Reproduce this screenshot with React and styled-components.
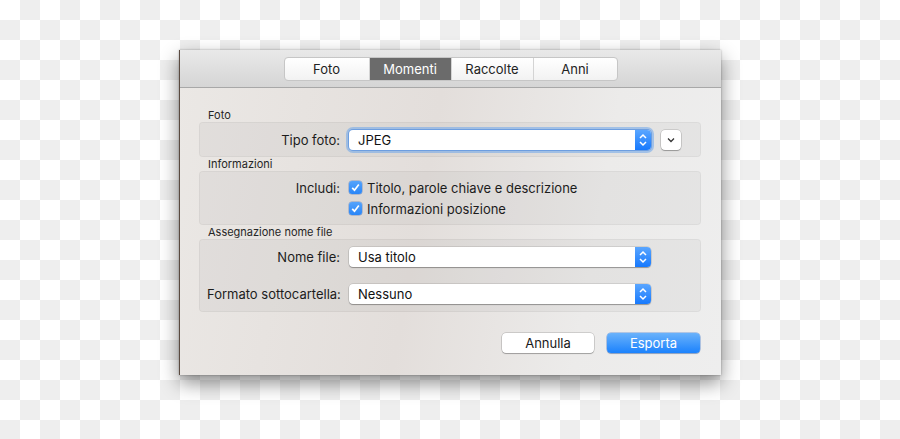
import React from 'react'
import styled, { createGlobalStyle } from 'styled-components'

const GlobalStyle = createGlobalStyle`
  body {
    margin: 0;
    font-family: Inter, 'Liberation Sans', sans-serif;
  }
`

const Page = styled.div`
  width: 900px;
  height: 439px;
  box-sizing: border-box;
  padding: 50px 0 0 179px;
  background-color: #fff;
  background-image: conic-gradient(#eee 0 25%, #fff 0 50%, #eee 0 75%, #fff 0);
  background-size: 40px 40px;
  overflow: hidden;
`

const Dialog = styled.div`
  width: 542px;
  height: 325px;
  display: flex;
  flex-direction: column;
  background: linear-gradient(100deg, #ebe8e5 0%, #e3dedb 45%, #ecebea 75%, #eeeeee 100%);
  box-shadow: 0 8px 18px rgba(0, 0, 0, 0.45), 0 0 2px rgba(0, 0, 0, 0.3);
  border-left: 1px solid #5a4a40;
  box-sizing: border-box;
`

const Toolbar = styled.div`
  height: 38px;
  flex-shrink: 0;
  display: flex;
  align-items: center;
  justify-content: center;
  background: linear-gradient(#e9e9e9, #d5d5d5);
  border-bottom: 1px solid #a8a8a8;
  box-sizing: border-box;
`

const Segmented = styled.div`
  display: flex;
  height: 24px;
  border: 1px solid #c6c6c6;
  border-radius: 4px;
  overflow: hidden;
  background: linear-gradient(#ffffff, #f2f2f2);
  box-sizing: border-box;
`

const Segment = styled.div`
  width: ${(p) => p.w}px;
  display: flex;
  align-items: center;
  justify-content: center;
  font-size: 13px;
  color: ${(p) => (p.active ? '#fff' : '#222')};
  background: ${(p) => (p.active ? '#6b6b6b' : 'transparent')};
  border-left: ${(p) => (p.first ? 'none' : '1px solid #d4d4d4')};
`

const Content = styled.div`
  padding: 20px 20px 0 19px;
`

const SectionLabel = styled.div`
  height: 14px;
  line-height: 14px;
  padding-left: 9px;
  font-size: 11px;
  color: #262626;
`

const Box = styled.div`
  height: ${(p) => p.h}px;
  box-sizing: border-box;
  display: flex;
  flex-direction: column;
  justify-content: center;
  gap: ${(p) => p.gap || 0}px;
  background: rgba(0, 0, 0, 0.035);
  border: 1px solid rgba(0, 0, 0, 0.045);
  border-radius: 4px;
`

const Row = styled.div`
  height: 20px;
  display: grid;
  grid-template-columns: 133px auto auto;
  column-gap: 9px;
  justify-content: start;
  align-items: center;
  padding-left: 7px;
`

const Label = styled.div`
  text-align: right;
  font-size: 13px;
  color: #1c1c1c;
  white-space: nowrap;
`

const Select = styled.div`
  width: 302px;
  height: 20px;
  display: flex;
  align-items: center;
  background: #fff;
  border-radius: 4px;
  overflow: hidden;
  box-shadow: ${(p) =>
    p.focused
      ? '0 0 0 1px #6d9ee0, 0 0 0 3px rgba(110, 165, 235, 0.55)'
      : '0 0 0 0.5px rgba(0,0,0,0.18), 0 1px 1px rgba(0,0,0,0.28)'};
`

const SelectText = styled.div`
  flex: 1;
  padding-left: 9px;
  font-size: 13px;
  color: #111;
`

const Stepper = styled.div`
  width: 16px;
  height: 100%;
  display: flex;
  align-items: center;
  justify-content: center;
  background: linear-gradient(#5aa6ff, #1779fd);
`

const Disclosure = styled.div`
  width: 20px;
  height: 20px;
  margin-left: 1px;
  box-sizing: border-box;
  display: flex;
  align-items: center;
  justify-content: center;
  background: #fff;
  border-radius: 4px;
  box-shadow: 0 0 0 0.5px rgba(0, 0, 0, 0.22), 0 1px 1px rgba(0, 0, 0, 0.25);
`

const Check = styled.label`
  display: flex;
  align-items: center;
  gap: 5px;
  font-size: 13px;
  color: #1c1c1c;
  white-space: nowrap;
`

const CheckBox = styled.span`
  width: 13px;
  height: 13px;
  border-radius: 3px;
  display: flex;
  align-items: center;
  justify-content: center;
  background: linear-gradient(#55a3fb, #2a86f7);
  box-shadow: 0 0 0 0.5px rgba(0, 60, 160, 0.4);
`

const Footer = styled.div`
  display: flex;
  justify-content: flex-end;
  gap: 13px;
  padding: 21px 21px 0 0;
`

const Button = styled.div`
  width: ${(p) => (p.primary ? 93 : 92)}px;
  height: 20px;
  display: flex;
  align-items: center;
  justify-content: center;
  font-size: 13px;
  border-radius: 4px;
  color: ${(p) => (p.primary ? '#fff' : '#1a1a1a')};
  background: ${(p) => (p.primary ? 'linear-gradient(#6ab2fb, #1b82fd)' : '#fff')};
  box-shadow: ${(p) =>
    p.primary
      ? '0 0 0 0.5px rgba(0,80,200,0.5), 0 1px 1px rgba(0,0,0,0.2)'
      : '0 0 0 0.5px rgba(0,0,0,0.25), 0 1px 1px rgba(0,0,0,0.22)'};
`

const StepperIcon = () => (
  <svg width="10" height="16" viewBox="0 0 10 16">
    <path d="M2 6 L5 3 L8 6" fill="none" stroke="#fff" strokeWidth="1.5" />
    <path d="M2 10 L5 13 L8 10" fill="none" stroke="#fff" strokeWidth="1.5" />
  </svg>
)

const ChevronDown = () => (
  <svg width="10" height="8" viewBox="0 0 10 8">
    <path d="M2 2.5 L5 5.5 L8 2.5" fill="none" stroke="#333" strokeWidth="1.3" />
  </svg>
)

const CheckMark = () => (
  <svg width="11" height="11" viewBox="0 0 11 11">
    <path d="M2.2 5.8 L4.5 8.2 L8.8 2.6" fill="none" stroke="#fff" strokeWidth="1.7" />
  </svg>
)

const PopUp = ({ value, focused }) => (
  <Select focused={focused}>
    <SelectText>{value}</SelectText>
    <Stepper>
      <StepperIcon />
    </Stepper>
  </Select>
)

const tabs = [
  { name: 'Foto', w: 84 },
  { name: 'Momenti', w: 81 },
  { name: 'Raccolte', w: 81 },
  { name: 'Anni', w: 83 },
]

export default function App() {
  return (
    <>
      <GlobalStyle />
      <Page>
        <Dialog>
          <Toolbar>
            <Segmented>
              {tabs.map((t, i) => (
                <Segment key={t.name} w={t.w} first={i === 0} active={t.name === 'Momenti'}>
                  {t.name}
                </Segment>
              ))}
            </Segmented>
          </Toolbar>
          <Content>
            <SectionLabel>Foto</SectionLabel>
            <Box h={35}>
              <Row>
                <Label>Tipo foto:</Label>
                <PopUp value="JPEG" focused />
                <Disclosure>
                  <ChevronDown />
                </Disclosure>
              </Row>
            </Box>
            <SectionLabel>Informazioni</SectionLabel>
            <Box h={54} gap={1}>
              <Row>
                <Label>Includi:</Label>
                <Check>
                  <CheckBox>
                    <CheckMark />
                  </CheckBox>
                  Titolo, parole chiave e descrizione
                </Check>
              </Row>
              <Row>
                <Label />
                <Check>
                  <CheckBox>
                    <CheckMark />
                  </CheckBox>
                  Informazioni posizione
                </Check>
              </Row>
            </Box>
            <SectionLabel>Assegnazione nome file</SectionLabel>
            <Box h={73} gap={17}>
              <Row>
                <Label>Nome file:</Label>
                <PopUp value="Usa titolo" />
              </Row>
              <Row>
                <Label>Formato sottocartella:</Label>
                <PopUp value="Nessuno" />
              </Row>
            </Box>
          </Content>
          <Footer>
            <Button>Annulla</Button>
            <Button primary>Esporta</Button>
          </Footer>
        </Dialog>
      </Page>
    </>
  )
}
